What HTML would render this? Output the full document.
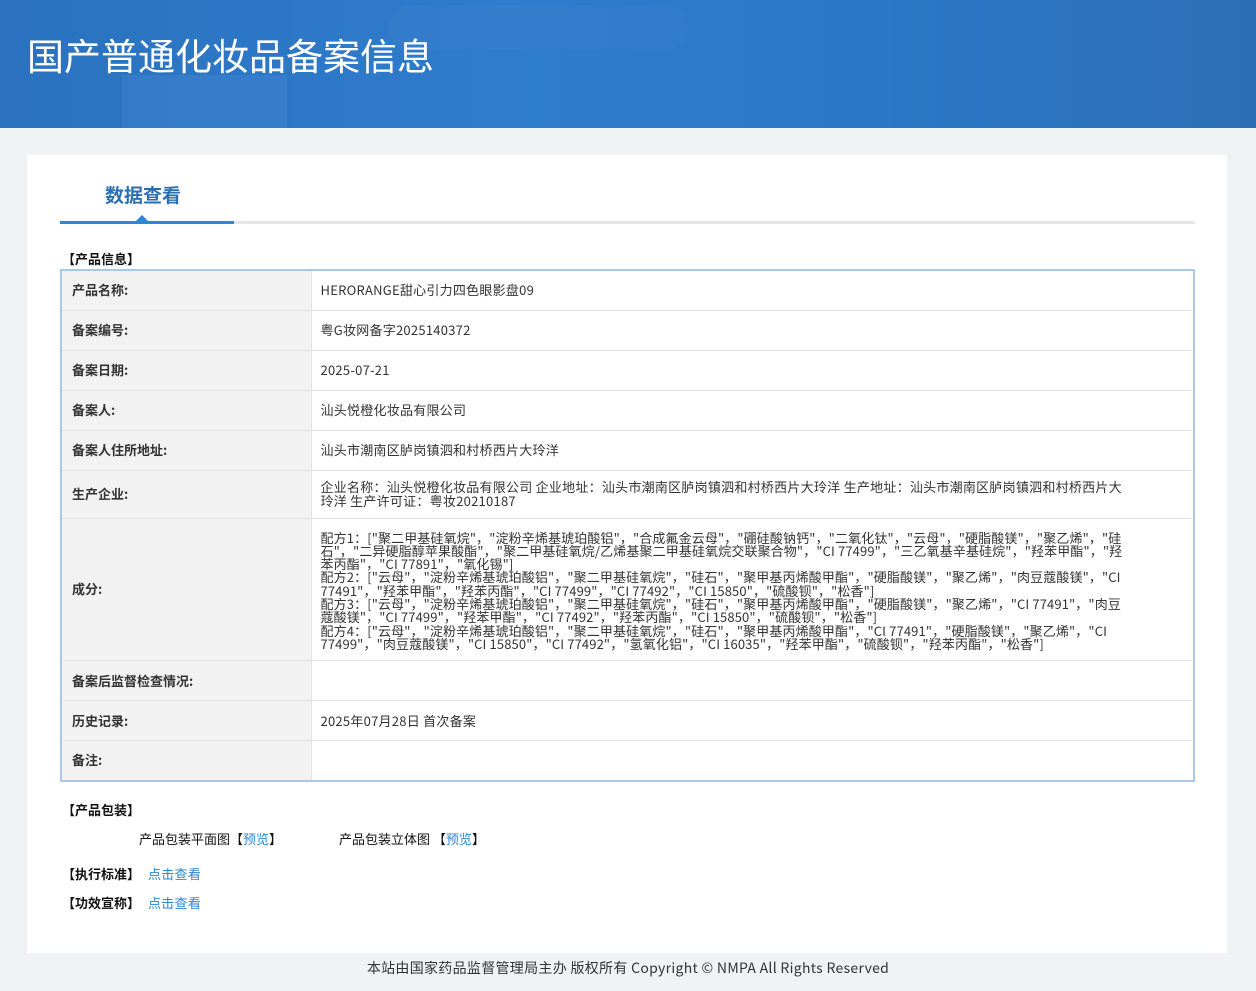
<!DOCTYPE html>
<html><head><meta charset="utf-8"><style>
*{margin:0;padding:0;box-sizing:border-box}
body{width:1256px;height:991px;background:#eff3f6;font-family:"Noto Sans CJK SC","Liberation Sans",sans-serif;color:#333;position:relative;overflow:hidden}
.hd{position:absolute;left:0;top:0;width:1256px;height:128px;background:linear-gradient(90deg,#2a72bf 0%,#2f7ccc 40%,#2a78c6 70%,#2d6fb6 100%);overflow:hidden}
.hd .b1{position:absolute;left:122px;top:75px;width:165px;height:60px;background:rgba(90,150,230,.2)}
.hd .b2{position:absolute;left:388px;top:5px;width:300px;height:45px;border-radius:30px;background:rgba(255,255,255,.02)}
.hd h1{position:absolute;left:27px;top:28px;font-size:37px;font-weight:normal;color:#fff;line-height:52px;font-family:"Noto Sans CJK SC",sans-serif}
.card{position:absolute;left:27px;top:155px;width:1200px;height:798px;background:#fff}
.tab{position:absolute;left:78px;top:26px;font-size:19px;font-weight:bold;color:#2a6fb2;line-height:28px}
.line{position:absolute;left:33px;top:66px;width:1135px;height:3px;background:#e6e6e6}
.line i{position:absolute;left:0;top:0;width:174px;height:3px;background:#2d86d6}
.line b{position:absolute;left:76px;top:-6px;width:0;height:0;border-left:6px solid transparent;border-right:6px solid transparent;border-bottom:6px solid #2d86d6}
.sec{position:absolute;font-size:13px;font-weight:bold;color:#111;line-height:18px}
table{position:absolute;left:33px;top:114px;width:1135px;border-collapse:collapse;border:2px solid #a9c8ea;font-size:13px;line-height:18px}
td{border:1px solid #e4e4e4;vertical-align:middle}
td.l{width:250px;background:#f2f2f2;font-weight:bold;color:#333;padding-left:10px}
td.v{padding-left:9px;color:#333;letter-spacing:0.25px}
.ing{line-height:13.3px;padding:12px 0 10px 9px;font-size:13px;letter-spacing:0.12px}
.a{color:#2d86d6}
.ft{position:absolute;top:957px;left:0;width:1256px;text-align:center;font-size:14px;color:#333;line-height:22px;letter-spacing:0.3px}
</style></head><body>
<div class="hd"><div class="b1"></div><div class="b2"></div><h1>国产普通化妆品备案信息</h1></div>
<div class="card">
<div class="tab">数据查看</div>
<div class="line"><i></i><b></b></div>
<div class="sec" style="left:35px;top:95px">【产品信息】</div>
<table>
<tr style="height:40px"><td class="l">产品名称:</td><td class="v">HERORANGE甜心引力四色眼影盘09</td></tr>
<tr style="height:40px"><td class="l">备案编号:</td><td class="v">粤G妆网备字2025140372</td></tr>
<tr style="height:40px"><td class="l">备案日期:</td><td class="v">2025-07-21</td></tr>
<tr style="height:40px"><td class="l">备案人:</td><td class="v">汕头悦橙化妆品有限公司</td></tr>
<tr style="height:40px"><td class="l">备案人住所地址:</td><td class="v">汕头市潮南区胪岗镇泗和村桥西片大玲洋</td></tr>
<tr style="height:48px"><td class="l">生产企业:</td><td class="v" style="line-height:14px">企业名称：汕头悦橙化妆品有限公司 企业地址：汕头市潮南区胪岗镇泗和村桥西片大玲洋 生产地址：汕头市潮南区胪岗镇泗和村桥西片大<br>玲洋 生产许可证：粤妆20210187</td></tr>
<tr style="height:141px"><td class="l">成分:</td><td class="ing">配方1：["聚二甲基硅氧烷"，"淀粉辛烯基琥珀酸铝"，"合成氟金云母"，"硼硅酸钠钙"，"二氧化钛"，"云母"，"硬脂酸镁"，"聚乙烯"，"硅<br>石"，"二异硬脂醇苹果酸酯"，"聚二甲基硅氧烷/乙烯基聚二甲基硅氧烷交联聚合物"，"CI 77499"，"三乙氧基辛基硅烷"，"羟苯甲酯"，"羟<br>苯丙酯"，"CI 77891"，"氧化锡"]<br>配方2：["云母"，"淀粉辛烯基琥珀酸铝"，"聚二甲基硅氧烷"，"硅石"，"聚甲基丙烯酸甲酯"，"硬脂酸镁"，"聚乙烯"，"肉豆蔻酸镁"，"CI<br>77491"，"羟苯甲酯"，"羟苯丙酯"，"CI 77499"，"CI 77492"，"CI 15850"，"硫酸钡"，"松香"]<br>配方3：["云母"，"淀粉辛烯基琥珀酸铝"，"聚二甲基硅氧烷"，"硅石"，"聚甲基丙烯酸甲酯"，"硬脂酸镁"，"聚乙烯"，"CI 77491"，"肉豆<br>蔻酸镁"，"CI 77499"，"羟苯甲酯"，"CI 77492"，"羟苯丙酯"，"CI 15850"，"硫酸钡"，"松香"]<br>配方4：["云母"，"淀粉辛烯基琥珀酸铝"，"聚二甲基硅氧烷"，"硅石"，"聚甲基丙烯酸甲酯"，"CI 77491"，"硬脂酸镁"，"聚乙烯"，"CI<br>77499"，"肉豆蔻酸镁"，"CI 15850"，"CI 77492"，"氢氧化铝"，"CI 16035"，"羟苯甲酯"，"硫酸钡"，"羟苯丙酯"，"松香"]</td></tr>
<tr style="height:40px"><td class="l">备案后监督检查情况:</td><td class="v"></td></tr>
<tr style="height:40px"><td class="l">历史记录:</td><td class="v">2025年07月28日 首次备案</td></tr>
<tr style="height:40px"><td class="l">备注:</td><td class="v"></td></tr>
</table>
<div class="sec" style="left:35px;top:646px">【产品包装】</div>
<div style="position:absolute;left:112px;top:675px;font-size:13px;color:#111;line-height:18px">产品包装平面图【<span class="a">预览</span>】</div>
<div style="position:absolute;left:312px;top:675px;font-size:13px;color:#111;line-height:18px">产品包装立体图 【<span class="a">预览</span>】</div>
<div class="sec" style="left:35px;top:710px">【执行标准】 <span class="a" style="font-weight:normal;margin-left:5px;letter-spacing:0.3px">点击查看</span></div>
<div class="sec" style="left:35px;top:739px">【功效宣称】 <span class="a" style="font-weight:normal;margin-left:5px;letter-spacing:0.3px">点击查看</span></div>
</div>
<div class="ft">本站由国家药品监督管理局主办 版权所有 Copyright © NMPA All Rights Reserved</div>
</body></html>
